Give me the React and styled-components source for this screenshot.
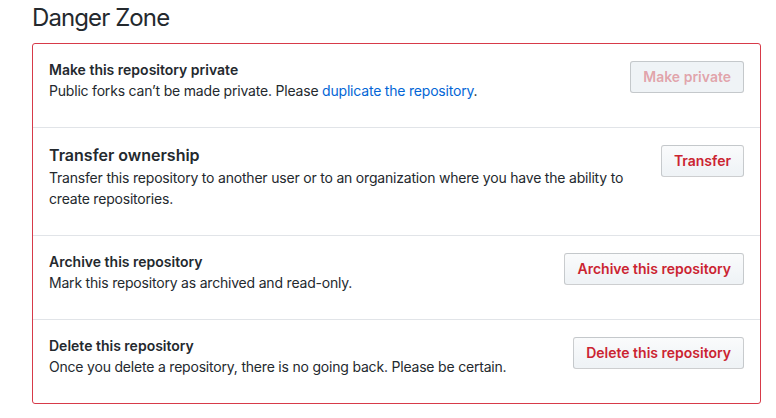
import styled, { createGlobalStyle } from "styled-components";

const GlobalStyle = createGlobalStyle`
  body {
    margin: 0;
    background: #fff;
    color: #24292e;
    font-family: Inter, "Liberation Sans", Arial, sans-serif;
    font-size: 14px;
    line-height: 1.5;
  }
`;

const Page = styled.div`
  padding: 0 15px 0 32px;
`;

const Heading = styled.h2`
  margin: 0 0 7px;
  font-size: 24px;
  font-weight: 400;
  line-height: 36px;
  letter-spacing: -0.9px;
`;

const Box = styled.div`
  border: 1px solid #d73a49;
  border-radius: 3px;
`;

const Row = styled.div`
  display: flex;
  justify-content: space-between;
  align-items: flex-start;
  gap: 16px;
  padding: 16px;
  & + & {
    border-top: 1px solid #e1e4e8;
  }
`;

const Info = styled.div`
  flex: 1;
`;

const Title = styled.div`
  font-weight: 600;
  font-size: ${(p) => (p.$large ? "16px" : "14px")};
  line-height: ${(p) => (p.$large ? "23px" : "20px")};
`;

const Desc = styled.p`
  margin: 0 0 10px;
  line-height: 21px;
  letter-spacing: -0.2px;
`;

const Link = styled.a`
  color: #0366d6;
  text-decoration: none;
`;

const Button = styled.button`
  flex: none;
  height: 32px;
  margin-top: 1px;
  padding: 0 12px;
  font-family: inherit;
  font-size: 14px;
  font-weight: 600;
  line-height: 20px;
  color: ${(p) => (p.disabled ? "rgba(203, 36, 49, 0.4)" : "#cb2431")};
  background: ${(p) =>
    p.disabled ? "#eff3f6" : "linear-gradient(-180deg, #fafbfc 0%, #eff3f6 90%)"};
  border: 1px solid rgba(27, 31, 35, 0.2);
  border-radius: 3px;
  cursor: ${(p) => (p.disabled ? "default" : "pointer")};
`;

const rows = [
  {
    title: "Make this repository private",
    desc: (
      <>
        Public forks can’t be made private. Please{" "}
        <Link href="#">duplicate the repository</Link>.
      </>
    ),
    button: "Make private",
    disabled: true,
  },
  {
    title: "Transfer ownership",
    large: true,
    desc: "Transfer this repository to another user or to an organization where you have the ability to create repositories.",
    button: "Transfer",
  },
  {
    title: "Archive this repository",
    desc: "Mark this repository as archived and read-only.",
    button: "Archive this repository",
  },
  {
    title: "Delete this repository",
    desc: "Once you delete a repository, there is no going back. Please be certain.",
    button: "Delete this repository",
  },
];

function App() {
  return (
    <>
      <GlobalStyle />
      <Page>
        <Heading>Danger Zone</Heading>
        <Box>
          {rows.map((row) => (
            <Row key={row.title}>
              <Info>
                <Title $large={row.large}>{row.title}</Title>
                <Desc>{row.desc}</Desc>
              </Info>
              <Button disabled={row.disabled}>{row.button}</Button>
            </Row>
          ))}
        </Box>
      </Page>
    </>
  );
}

export default App;
